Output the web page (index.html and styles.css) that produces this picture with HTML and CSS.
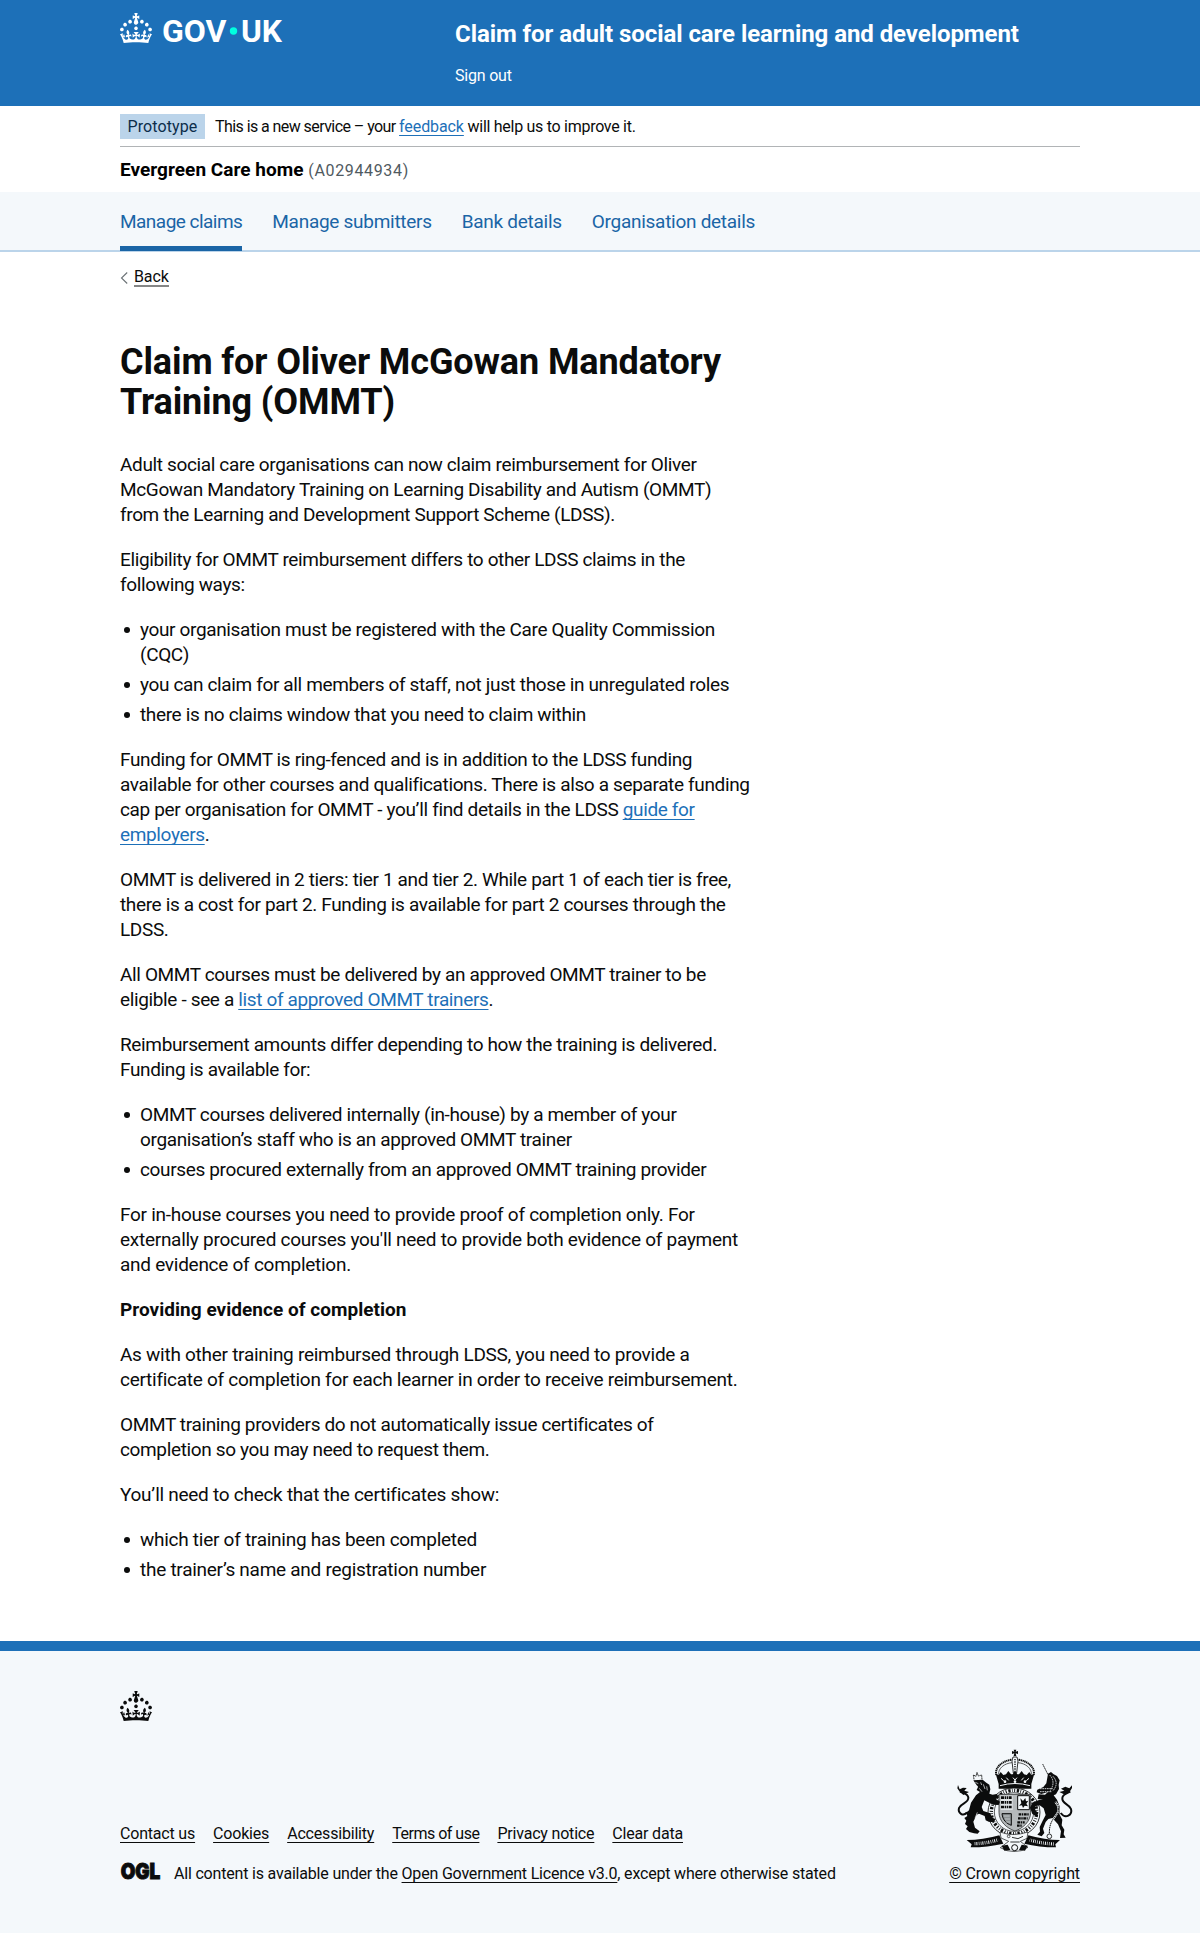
FILE: index.html
```html
<!DOCTYPE html>
<html lang="en">
<head>
<meta charset="utf-8">
<title>Claim for Oliver McGowan Mandatory Training (OMMT)</title>
<link rel="stylesheet" href="styles.css">
</head>
<body>
<svg width="0" height="0" class="defs" aria-hidden="true">
  <symbol id="crown" viewBox="0 0 32 30"><path fill="currentColor" fill-rule="evenodd" d="M22.6 10.4c-1 .4-2-.1-2.4-1-.4-.9.1-2 1-2.4.9-.4 2 .1 2.4 1s-.1 2-1 2.4m-5.9 6.7c-.9.4-2-.1-2.4-1-.4-.9.1-2 1-2.4.9-.4 2 .1 2.4 1s-.1 2-1 2.4m10.8-3.7c-1 .4-2-.1-2.4-1-.4-.9.1-2 1-2.4.9-.4 2 .1 2.4 1s0 2-1 2.4m3.3 4.8c-1 .4-2-.1-2.4-1-.4-.9.1-2 1-2.4.9-.4 2 .1 2.4 1s-.1 2-1 2.4M17 4.7l2.3 1.2V2.5l-2.3.7-.2-.2.9-3h-3.4l.9 3-.2.2c-.1.1-2.3-.7-2.3-.7v3.4L15 4.7c.1.1.1.2.2.2l-1.3 4c-.1.2-.1.4-.1.6 0 1.1.8 2 1.9 2.2h.7c1-.2 1.9-1.1 1.9-2.1 0-.2 0-.4-.1-.6l-1.3-4c-.1-.2 0-.2.1-.3m-7.6 5.7c.9.4 2-.1 2.4-1 .4-.9-.1-2-1-2.4-.9-.4-2 .1-2.4 1s0 2 1 2.4m-5 3c.9.4 2-.1 2.4-1 .4-.9-.1-2-1-2.4-.9-.4-2 .1-2.4 1s.1 2 1 2.4m-3.2 4.8c.9.4 2-.1 2.4-1 .4-.9-.1-2-1-2.4-.9-.4-2 .1-2.4 1s0 2 1 2.4m14.8 11c4.4 0 8.6.3 12.3.8 1.1-4.5 2.4-7 3.7-8.8l-2.5-.9c.2 1.3.3 1.9 0 2.7-.4-.4-.8-1.1-1.1-2.3l-1.2 4c.7-.5 1.3-.8 2-.9-1.1 2.5-2.6 3.1-3.5 3-1.1-.2-1.7-1.2-1.5-2.1.3-1.2 1.5-1.5 2.1-.1 1.1-2.3-.8-3-2-2.3 1.9-1.9 2.1-3.5.6-5.6-2.1 1.6-2.1 3.2-1.2 5.5-1.2-1.4-3.2-.6-2.5 1.6.9-1.4 2.1-.5 1.9.8-.2 1.1-1.7 2.1-3.5 1.9-2.7-.2-2.9-2.1-2.9-3.6.7-.1 1.9.5 2.9 1.9l.4-4.3c-1.1 1.1-2.1 1.4-3.2 1.4.4-1.2 2.1-3 2.1-3h-5.4s1.7 1.9 2.1 3c-1.1 0-2.1-.2-3.2-1.4l.4 4.3c1-1.4 2.2-2 2.9-1.9-.1 1.5-.2 3.4-2.9 3.6-1.9.2-3.4-.8-3.5-1.9-.2-1.3 1-2.2 1.9-.8.7-2.3-1.2-3-2.5-1.6.9-2.2.9-3.9-1.2-5.5-1.5 2-1.3 3.7.6 5.6-1.2-.7-3.1 0-2 2.3.6-1.4 1.8-1.1 2.1.1.2.9-.3 1.9-1.5 2.1-.9.2-2.4-.5-3.5-3 .6 0 1.2.3 2 .9l-1.2-4c-.3 1.1-.7 1.9-1.1 2.3-.3-.8-.2-1.4 0-2.7l-2.9.9C1.3 23 2.6 25.5 3.7 30c3.7-.5 7.9-.8 12.3-.8"/></symbol>
</svg>

<header class="header">
  <div class="container header-inner">
    <a class="logo" href="#" aria-label="GOV.UK">
      <svg width="164" height="30" viewBox="0 0 164 30">
        <use href="#crown" width="32" height="30"/>
        <g class="wordmark">
          <text x="42" y="28.6" textLength="64.5" lengthAdjust="spacingAndGlyphs">GOV</text>
          <text x="121" y="28.6" textLength="41" lengthAdjust="spacingAndGlyphs">UK</text>
        </g>
        <circle cx="113.5" cy="18" r="3.7" fill="#00ffe0"/>
      </svg>
    </a>
    <div class="service">
      <a class="service-name" href="#">Claim for adult social care learning and development</a>
      <a class="sign-out" href="#">Sign out</a>
    </div>
  </div>
</header>

<div class="container">
  <div class="phase">
    <strong class="tag">Prototype</strong>
    <span class="phase-text">This is a new service – your <a class="link" href="#">feedback</a><span class="phase-end"> will help us to improve it.</span></span>
  </div>
  <div class="org"><strong>Evergreen Care home</strong> <span class="org-id">(A02944934)</span></div>
</div>

<nav class="nav">
  <div class="container nav-list">
    <a class="nav-item current" href="#">Manage claims</a>
    <a class="nav-item" href="#">Manage submitters</a>
    <a class="nav-item" href="#">Bank details</a>
    <a class="nav-item" href="#">Organisation details</a>
  </div>
</nav>

<div class="container">
  <a class="back" href="#"><svg width="8" height="12" viewBox="0 0 8 12"><path d="M7.2 .5L1.5 6l5.7 5.5" fill="none" stroke="#6b7276" stroke-width="1.1"/></svg><span>Back</span></a>
  <main class="main">
    <h1>Claim for Oliver McGowan Mandatory Training (OMMT)</h1>
    <p>Adult social care organisations can now claim reimbursement for Oliver McGowan Mandatory Training on Learning Disability and Autism (OMMT)<br>from the Learning and Development Support Scheme (LDSS).</p>
    <p>Eligibility for OMMT reimbursement differs to other LDSS claims in the following ways:</p>
    <ul>
      <li>your organisation must be registered with the Care Quality Commission (CQC)</li>
      <li>you can claim for all members of staff, not just those in unregulated roles</li>
      <li>there is no claims window that you need to claim within</li>
    </ul>
    <p>Funding for OMMT is ring-fenced and is in addition to the LDSS funding available for other courses and qualifications. There is also a separate funding cap per organisation for OMMT - you’ll find details in the LDSS <a class="link" href="#">guide for employers</a>.</p>
    <p>OMMT is delivered in 2 tiers: tier 1 and tier 2. While part 1 of each tier is free, there is a cost for part 2. Funding is available for part 2 courses through the LDSS.</p>
    <p>All OMMT courses must be delivered by an approved OMMT trainer to be eligible - see a <a class="link" href="#">list of approved OMMT trainers</a>.</p>
    <p>Reimbursement amounts differ depending to how the training is delivered. Funding is available for:</p>
    <ul>
      <li>OMMT courses delivered internally (in-house) by a member of your organisation’s staff who is an approved OMMT trainer</li>
      <li>courses procured externally from an approved OMMT training provider</li>
    </ul>
    <p class="loose">For in-house courses you need to provide proof of completion only. For externally procured courses you'll need to provide both evidence of payment and evidence of completion.</p>
    <h2>Providing evidence of completion</h2>
    <p class="loose">As with other training reimbursed through LDSS, you need to provide a certificate of completion for each learner in order to receive reimbursement.</p>
    <p>OMMT training providers do not automatically issue certificates of<br>completion so you may need to request them.</p>
    <p class="loose">You’ll need to check that the certificates show:</p>
    <ul class="loose">
      <li>which tier of training has been completed</li>
      <li>the trainer’s name and registration number</li>
    </ul>
  </main>
</div>

<footer class="footer">
  <div class="container">
    <svg class="footer-crown" width="32" height="30"><use href="#crown"/></svg>
    <div class="meta">
      <div>
        <div class="footer-links">
          <a href="#">Contact us</a><a href="#">Cookies</a><a href="#">Accessibility</a><a class="tight" href="#">Terms of use</a><a href="#">Privacy notice</a><a href="#">Clear data</a>
        </div>
        <div class="licence">
          <svg width="41" height="17" viewBox="0 0 41 17" aria-label="OGL"><text class="ogl" x="0.7" y="16.1" textLength="39.6" lengthAdjust="spacingAndGlyphs">OGL</text></svg>
          <span>All content is available under the <a href="#">Open Government Licence v3.0</a>, except where otherwise stated</span>
        </div>
      </div>
      <a class="copyright" href="#">
        <svg width="117" height="104" viewBox="170 60 351 312" fill="none" stroke="#0b0c0c">
          <!-- crown -->
          <path d="M343 62h8l-2 6 7-2v9l-7-2 2 8h-8l2-8-7 2v-9l7 2z" fill="#0b0c0c" stroke="none"/>
          <path d="M291 138c-6-22 18-43 47-46M403 138c6-22-18-43-47-46" stroke-width="6" stroke-dasharray="4 1.6"/>
          <path d="M298 137c-2-19 17-34 40-36M396 137c2-19-17-34-40-36" stroke-width="2"/>
          <path d="M341 84h12l3 12-4 36h-10l-4-36z" stroke-width="2.5" fill="#f4f8fb"/>
          <path d="M347 90v38" stroke-width="4" stroke-dasharray="4 3"/>
          <path d="M289 134l9 4 6-9 8 9 8-2 7-10 8 10h5l7-11 7 11h5l8-10 7 10 8 2 8-9 6 9 9-4-9 31v14H298v-14z" fill="#0b0c0c" stroke="none"/>
          <path d="M305 148l8 7M321 146l7 8M341 146l6 7 6-7M366 154l7-8M381 155l8-7M302 170q45-13 90 0" stroke="#f4f8fb" stroke-width="3"/>
          <g fill="#f4f8fb" stroke="none"><circle cx="317" cy="158" r="4"/><circle cx="347" cy="158" r="4"/><circle cx="377" cy="158" r="4"/></g>
          <!-- garter and shield -->
          <ellipse cx="344" cy="250" rx="78" ry="73" stroke-width="2.5" fill="#f4f8fb"/>
          <ellipse cx="344" cy="249" rx="68" ry="65" stroke-width="10" stroke-dasharray="3 5 7 4 2 5"/>
          <ellipse cx="344" cy="249" rx="59" ry="58" stroke-width="2" fill="#f4f8fb"/>
          <path d="M299 196h95v54c0 27-23 48-47 56-25-8-48-29-48-56z" fill="#b5b9bb" stroke-width="2"/>
          <path d="M304 200h36v43h-36z" fill="#dfe3e5" stroke="none"/>
          <path d="M305 206h33M305 220h33M305 234h33" stroke-width="8" stroke-dasharray="9 2 5 2 3 2"/>
          <path d="M355 200h35v42h-35z" fill="#f4f8fb" stroke-width="3"/>
          <path d="M363 208l8 8 7-9 2 10 7-2-6 9 5 8-10-2-5 7-3-8-9 1 7-7z" fill="#0b0c0c" stroke="none"/>
          <path d="M358 256h31M356 268h29M354 280h22M353 290h14" stroke-width="7" stroke-dasharray="8 2 4 2"/>
          <path d="M308 254h28v35c-14-5-26-15-28-35z" stroke-width="3" fill="#8d9294"/>
          <path d="M314 261h17M317 270h15M321 279h12" stroke-width="2" stroke="#d8dcde"/>
          <!-- lion -->
          <path d="M224 151l-2-13 8 4 3-12 4 11 10-3 1 14" stroke-width="2.5" stroke-dasharray="4 1"/>
          <path d="M222 154l28-2 11 9 9 6 3 14-3 13 10 3 12-2 7 11-10 4 13 8-4 10-17-1-26-13-8 20 5 12 21 7 4 12 12 6-6 9-15-2-9-4-3-13-17-7-7 3-10 21 5 18 14 11-6 7-11-1-14-4-10-9 5-8-8-7 4-10-6-8 9-6-4-10 9-7 6-23 15-22 12-10-10-6 4-9-6-8z" fill="#0b0c0c" stroke="none"/>
          <path d="M228 160l9 4M226 173l10-1M240 178l8 10M252 166l5 14M234 250l-7 18M262 172l2 12M244 160l3 8" stroke="#f4f8fb" stroke-width="2"/>
          <path d="M203 250c-12 14-28 2-24-13 6-16 29-14 28-31-1-12-14-13-25-19" stroke-width="6"/>
          <path d="M176 168l5 13 10-5 11 1-7 8 14 4-17 9-12-11-6-9z" fill="#0b0c0c" stroke="none"/>
          <!-- unicorn -->
          <path d="M430 105l16 32" stroke-width="2.5" stroke-dasharray="5 1"/>
          <path d="M446 134l9-5 8 7 10 5 8 13-3 13 1 13-9 16-7 3 10 13 9 23-2 20 9 17-2 17 8 13-2 14 6 10-17 1 3-20-9-21-17-19-12 3-8 9-8 20 4 13-8 10-13-5 8-9-1-14 9-19 9-17-6-20-12-9-14 3 1 12 9 9-5 9-13-7-7-19 7-15 20-8 12-1-16-2 3-14 19 1 9-8-20 6-14-5 2-8 18-8 9-11z" fill="#0b0c0c" stroke="none"/>
          <path d="M461 142q19 21 0 43M451 138q19 20 2 47M422 179h38M422 188h36" stroke="#f4f8fb" stroke-width="2.5" stroke-dasharray="5 2"/>
          <path d="M468 219c18 20 8 33-4 48s-14 30-14 48" stroke="#f4f8fb" stroke-width="6"/>
          <path d="M468 219c18 20 8 33-4 48s-14 30-14 48" stroke-width="3" stroke-dasharray="5 2"/>
          <circle cx="450" cy="322" r="7" stroke-width="2.5"/>
          <path d="M484 252c15 20 36 5 31-12-5-15-28-15-26-33 1-11 13-14 24-19" stroke-width="6"/>
          <path d="M518 169l-8 9-12-5-13 6 10 6-15 4 17 8 16-12 5-8z" fill="#0b0c0c" stroke="none"/>
          <!-- motto ribbon -->
          <path d="M202 333q49 0 98-14l12 25q-47 11-98 11l3-9z" fill="#0b0c0c" stroke="none"/>
          <path d="M482 333q-46 0-95-14l-12 25q44 11 95 11l-2-9z" fill="#0b0c0c" stroke="none"/>
          <path d="M226 344q38-1 71-12M463 345q-39-2-72-12" stroke="#f4f8fb" stroke-width="10" stroke-dasharray="2 3 3 4 2 4"/>
          <path d="M302 309q38 15 84 0l-3 19-20 9 23 18-20 10q-22 5-43 0l-20-9 25-19-23-10z" fill="#f4f8fb" stroke-width="2"/>
          <path d="M307 350l18-3 8 16-18 2zM385 350l-18-3-8 16 18 2z" fill="#0b0c0c" stroke="none"/>
          <circle cx="346" cy="356" r="9" stroke-width="3"/>
          <circle cx="328" cy="322" r="4" stroke-width="2"/><path d="M338 325l18 4 15-7M333 339h28" stroke-width="2.5"/>
        </svg>
        <span>© Crown copyright</span>
      </a>
    </div>
  </div>
</footer>
</body>
</html>
```
FILE: styles.css
```css
* { box-sizing: border-box; }
body {
  margin: 0;
  background: #fff;
  color: #0b0c0c;
  font: 19px/25px Roboto, "Liberation Sans", sans-serif;
  letter-spacing: -0.36px;
}
a { color: inherit; text-decoration: none; }
svg { overflow: visible; }
.defs { position: absolute; }
.container { width: 960px; margin: 0 auto; }
.link {
  color: #1d70b8;
  text-decoration: underline;
  text-decoration-thickness: 1px;
  text-underline-offset: 3px;
  text-decoration-skip-ink: none;
}

.header { height: 106px; background: #1d70b8; color: #fff; }
.header-inner { display: grid; grid-template-columns: 335px 1fr; }
.logo { padding-top: 13px; }
.logo svg { display: block; }
.wordmark { font: 700 30.5px Roboto, sans-serif; letter-spacing: 0; fill: #fff; }
.service { display: flex; flex-direction: column; padding-top: 19px; }
.service-name { font-size: 24px; font-weight: 700; line-height: 30px; letter-spacing: -0.07px; }
.sign-out { margin-top: 17px; font-size: 16px; line-height: 20px; letter-spacing: -0.2px; }

.phase {
  display: flex;
  align-items: center;
  height: 41px;
  padding-top: 1px;
  border-bottom: 1px solid #b1b4b6;
  font-size: 16px;
  line-height: 20px;
}
.phase-text { letter-spacing: -0.57px; }
.phase-text .link { letter-spacing: -0.1px; }
.phase-end { letter-spacing: -0.28px; }
.tag {
  width: 85px;
  height: 25px;
  margin-right: 10px;
  background: #bbd4ea;
  color: #0c2d4a;
  font-weight: 400;
  line-height: 25px;
  text-align: center;
  letter-spacing: 0.1px;
}
.org { height: 45px; padding-top: 10px; line-height: 25px; color: #000; letter-spacing: 0.03px; }
.org-id { font-size: 16px; letter-spacing: 0.65px; color: #505a5f; }

.nav { height: 60px; background: #f4f8fb; border-bottom: 2px solid #bbd4ea; }
.nav-list { display: flex; gap: 30px; }
.nav-item { height: 59px; padding-top: 17px; color: #1a65a6; letter-spacing: -0.28px; white-space: nowrap; }
.current { border-bottom: 5px solid #1a65a6; letter-spacing: -0.53px; }

.back {
  display: flex;
  align-items: center;
  gap: 6px;
  margin-top: 16px;
  font-size: 16px;
  line-height: 20px;
  letter-spacing: -0.1px;
}
.back span { border-bottom: 2px solid #858686; line-height: 17px; }

.main { width: 640px; padding: 55px 0 39px; }
h1 { margin: 0 0 30px; font-size: 36px; line-height: 40px; letter-spacing: -0.115px; }
h2 { margin: 0 0 20px; font-size: 19px; line-height: 25px; letter-spacing: 0.03px; }
p { margin: 0 0 20px; }
.loose { letter-spacing: -0.27px; }
ul { margin: 0 0 20px; padding-left: 20px; list-style: none; }
li { margin-bottom: 5px; }
li:last-child { margin-bottom: 0; }
li::before {
  content: "";
  display: inline-block;
  width: 6px;
  height: 6px;
  margin: 0 10px 0 -16px;
  border-radius: 50%;
  background: #0b0c0c;
  vertical-align: 3px;
}

.footer {
  height: 292px;
  padding-top: 40px;
  background: #f4f8fb;
  border-top: 10px solid #1d70b8;
  font-size: 16px;
  line-height: 20px;
  letter-spacing: -0.19px;
}
.footer-crown { display: block; margin-bottom: 28px; }
.meta { display: flex; justify-content: space-between; align-items: flex-end; }
.meta a:not(.copyright), .copyright span {
  text-decoration: underline;
  text-decoration-thickness: 1px;
  text-underline-offset: 3px;
  text-decoration-skip-ink: none;
}
.footer-links { display: flex; gap: 18px; margin-bottom: 20px; }
.footer-links .tight { letter-spacing: -0.5px; }
.licence { display: flex; align-items: center; gap: 13px; }
.licence svg { margin-top: -6px; }
.ogl { font: 900 21.5px Inter, sans-serif; letter-spacing: 0; fill: #0b0c0c; stroke: #0b0c0c; stroke-width: 1px; }
.copyright { display: flex; flex-direction: column; align-items: flex-end; }
.copyright svg { margin: 0 7px 11px 0; }
.copyright span { white-space: nowrap; letter-spacing: -0.1px; }
```
